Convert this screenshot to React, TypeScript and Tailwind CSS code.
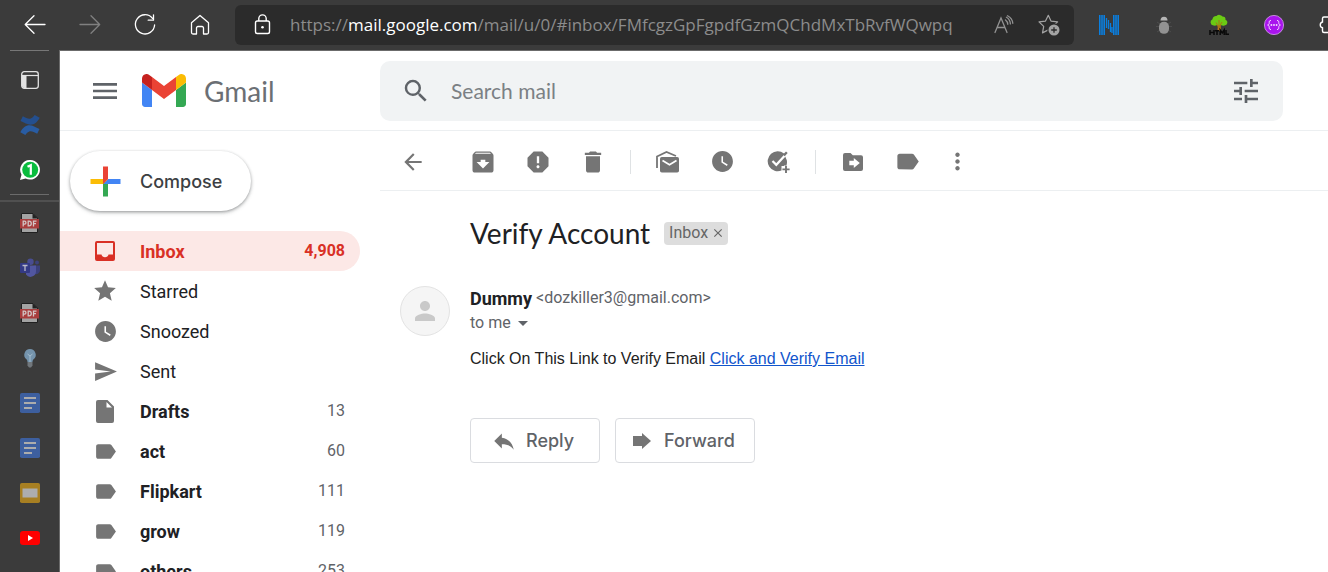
import { useState, type ReactNode } from "react";
import {
  MdArchive,
  MdArrowBack,
  MdArrowDropDown,
  MdClose,
  MdDelete,
  MdLabel,
  MdMenu,
  MdMoreVert,
  MdPerson,
  MdReply,
  MdReport,
  MdSearch,
  MdSend,
  MdStar,
  MdTune,
  MdWatchLater,
} from "react-icons/md";

const URL_HOST = "mail.google.com";
const URL_PATH = "/mail/u/0/#inbox/FMfcgzGpFgpdfGzmQChdMxTbRvfWQwpq";

function ChromeButton({ label, children }: { label: string; children: ReactNode }) {
  return (
    <button type="button" aria-label={label} className="flex h-10 w-[55px] shrink-0 items-center justify-center">
      {children}
    </button>
  );
}

function Line({ d, className }: { d: string; className: string }) {
  return (
    <svg viewBox="0 0 24 24" fill="none" stroke="currentColor" strokeWidth="1.3" strokeLinecap="round" strokeLinejoin="round" className={className}>
      <path d={d} />
    </svg>
  );
}

function AddressBar() {
  const [editing, setEditing] = useState(false);
  return (
    <div className="flex h-10 min-w-0 flex-1 items-center rounded-md bg-[#2b2b2b]">
      <button type="button" aria-label="Site information" className="flex w-[55px] shrink-0 items-center justify-center text-white">
        <svg viewBox="0 0 24 24" fill="none" stroke="currentColor" strokeWidth="1.4" className="size-6">
          <rect x="4.500" y="8" width="14" height="12.500" rx="1.8" />
          <path d="M7.800 8V5.600a3.7 3.7 0 0 1 7.4 0V8" />
          <circle cx="11.500" cy="14.300" r="1.3" fill="currentColor" stroke="none" />
        </svg>
      </button>
      {editing ? (
        <input
          aria-label="Address"
          autoFocus
          defaultValue={`https://${URL_HOST}${URL_PATH}`}
          onBlur={() => setEditing(false)}
          className="min-w-0 flex-1 bg-transparent font-['Open_Sans',sans-serif] text-[17px] text-white outline-none"
        />
      ) : (
        <button
          type="button"
          onClick={() => setEditing(true)}
          className="min-w-0 flex-1 overflow-hidden whitespace-nowrap text-left font-['Open_Sans',sans-serif] text-[17px] leading-6 text-[#8c8c8c]"
        >
          https://<span className="text-white">{URL_HOST}</span>
          {URL_PATH}
        </button>
      )}
      <button type="button" aria-label="Read aloud" className="flex w-[45px] items-center justify-center text-[#929292]">
        <svg viewBox="0 0 20 20" fill="none" stroke="currentColor" strokeWidth="1.3" strokeLinecap="round" className="size-5">
          <path d="M1 17.500 7 3l6 14.500M3 12.500h8M11.500 5c1.4 1 2.2 2.500 2.300 4.300M12.400 2.300c2.400 1.400 3.800 3.700 4 6.600M13.500.8c3.200 1.700 5 4.300 5.300 7.500" />
        </svg>
      </button>
      <button type="button" aria-label="Add to favorites" className="mr-[3px] flex w-[45px] items-center justify-center text-[#a3a3a3]">
        <svg viewBox="0 0 22 22" fill="none" className="size-[22px]">
          <path d="m10.300 1.300 2.700 5.800 6.600.8-4.800 4.500 1.100 6.500-5.600-3-5.800 3 1.200-6.500L1 7.900l6.500-.8z" stroke="currentColor" strokeWidth="1.2" strokeLinejoin="round" />
          <circle cx="16" cy="16" r="6.700" fill="#2b2b2b" />
          <circle cx="16" cy="16" r="5.500" fill="currentColor" />
          <path d="M16 13.200v5.600M13.200 16h5.600" stroke="#2b2b2b" strokeWidth="1.300" />
        </svg>
      </button>
    </div>
  );
}

function BrowserBar() {
  return (
    <header className="flex h-[50px] shrink-0 items-center bg-[#3b3b3b] pl-[7px] text-white">
      <ChromeButton label="Back">
        <Line className="size-6" d="M22 11.500H2.500M11 2.800 2.200 11.500l8.800 8.700" />
      </ChromeButton>
      <span className="flex text-[#808080]">
        <ChromeButton label="Forward">
          <Line className="size-6" d="M2 11.500h19.500M13 2.800l8.700 8.700-8.700 8.700" />
        </ChromeButton>
      </span>
      <ChromeButton label="Refresh">
        <Line className="size-6" d="M19.500 5.300A9.600 9.600 0 1 0 21.600 12M20.500 1.800v5.400h-5.300" />
      </ChromeButton>
      <ChromeButton label="Home">
        <Line className="size-6" d="M3.500 9.800 12 2.500l8.500 7.300v9.700a1.500 1.500 0 0 1-1.500 1.500h-3.500v-6a1.500 1.500 0 0 0-1.500-1.500h-4A1.500 1.500 0 0 0 8.500 15v6H5a1.500 1.500 0 0 1-1.500-1.500z" />
      </ChromeButton>
      <div className="flex min-w-0 flex-1 pl-2">
        <AddressBar />
      </div>
      <div className="flex pl-[7px]">
        <ChromeButton label="Reader extension">
          <svg viewBox="0 0 20 20" className="size-5" stroke="#0a7fe0">
            <path d="M.8 0v20M3 0v20M5.200 0v20M14.800 0v20M17 0v20M19.200 0v20" strokeWidth="1.600" />
            <path d="M7.500 3v10M9.500 5v9M11.500 8v9M13 12v6" strokeWidth="1.300" />
          </svg>
        </ChromeButton>
        <ChromeButton label="Bug extension">
          <svg viewBox="0 0 20 20" className="size-5">
            <path d="M3 7l3 2M2 11.500h4M3 17l3-2M17 7l-3 2M18 11.500h-4M17 17l-3-2" stroke="#4c4c4c" />
            <path d="M6.500 5.500a3.500 3.800 0 0 1 7 0z" fill="#b5b5b5" />
            <rect x="5" y="6.800" width="10" height="12" rx="4.800" fill="#929292" />
          </svg>
        </ChromeButton>
        <ChromeButton label="HTML tree extension">
          <svg viewBox="0 0 20 20" className="h-5 w-5 overflow-visible">
            <path d="M9 7h2.500l.5 9H8.500z" fill="#c07a16" />
            <path d="M4.500 10.500a3.300 3.300 0 0 1-1-6.300A3.500 3.500 0 0 1 7.500 1a4 4 0 0 1 6 .5 3 3 0 0 1 3 3.200 3 3 0 0 1-1 5.800c-2 .7-3.500-.5-5.500-.500s-3.500 1-5.500.500z" fill="#6bcb14" />
            <path d="m10 13-3-5.500M10 12l3-5M10 12V5" stroke="#a97912" fill="none" />
            <path d="M1 15v5M5 15v5M1 17.500h4M6 15.700h4M8 15v5M11.200 20v-5l2 3 2-3v5M17 15v4.300h3" stroke="#090909" strokeWidth="1.500" fill="none" />
          </svg>
        </ChromeButton>
        <ChromeButton label="JSON extension">
          <svg viewBox="0 0 20 20" className="size-5">
            <circle cx="10" cy="10" r="9.600" fill="#a914ed" stroke="#d6a1ed" strokeWidth=".8" />
            <path d="M7 5.500c-1.800 0-1.800.8-1.800 2.200S5 9.600 3.600 10C5 10.400 5.200 11 5.200 12.300s0 2.200 1.800 2.200M13 5.500c1.800 0 1.800.8 1.800 2.200s.2 1.900 1.600 2.300c-1.400.4-1.600 1-1.600 2.300s0 2.200-1.800 2.200" stroke="#f5ddff" fill="none" />
            <path d="M6.600 10h1.600M9.200 10h1.600M11.800 10h1.600" stroke="#fff" strokeWidth="1.500" />
          </svg>
        </ChromeButton>
      </div>
      <button type="button" aria-label="Extensions" className="flex w-[27px] shrink-0 justify-end overflow-hidden">
        <svg viewBox="0 0 9 22" fill="none" stroke="#fff" strokeWidth="1.400" className="h-[22px] w-[9px]">
          <path d="M10 3H5a1.500 1.500 0 0 0-1.500 1.500V8a3 3 0 0 0 0 5.800V17A1.500 1.500 0 0 0 5 18.500h5" />
        </svg>
      </button>
    </header>
  );
}

function RailTab({ label, children }: { label: string; children: ReactNode }) {
  return (
    <button type="button" aria-label={label} className="flex h-[45px] w-full shrink-0 items-center justify-center">
      {children}
    </button>
  );
}

function PdfIcon() {
  return (
    <svg viewBox="0 0 20 20" className="size-5">
      <path d="M1.500.5h11.500l4.500 4.500v14.500h-16z" fill="#a3a3a3" stroke="#202020" />
      <path d="M12.500 0 18 5.500h-5.500z" fill="#222" />
      <path d="M0 6h19v9.500H0z" fill="#a83e3e" />
      <path d="M3.200 13.500V8.200h1.300a1.400 1.400 0 0 1 0 2.900H3.200M8.200 8.200v4.600h.8a2.300 2.300 0 0 0 0-4.600zM13.500 13.500V8.200h3M13.500 10.700h2.500" stroke="#d3c6c6" strokeWidth="1.300" fill="none" />
    </svg>
  );
}

function DocsIcon() {
  return (
    <svg viewBox="0 0 20 20" className="size-5">
      <rect width="20" height="20" rx="1.800" fill="#3d5f9f" />
      <path d="M4 5h12M4 10h12M4 15h8" stroke="#acacac" strokeWidth="1.900" />
    </svg>
  );
}

function TabRail() {
  return (
    <aside className="flex w-[60px] shrink-0 flex-col overflow-hidden border-r border-[#6b6b6b] bg-[#3b3b3b]">
      <div className="mx-[10px] h-px shrink-0 bg-[#777]" />
      <div className="flex h-[143px] shrink-0 flex-col pt-[6px]">
        <RailTab label="Tab actions">
          <svg viewBox="0 0 18 18" className="size-[18px]">
            <rect x=".7" y=".7" width="16.600" height="16.600" rx="2.500" fill="none" stroke="#e2e2e2" strokeWidth="1.300" />
            <path d="M1 4.500h4.500V17H3a2 2 0 0 1-2-2z" fill="#e2e2e2" />
            <path d="M1 4.500h16" stroke="#e2e2e2" strokeWidth="1.200" />
          </svg>
        </RailTab>
        <RailTab label="Confluence">
          <svg viewBox="0 0 20 20" className="size-5">
            <path d="M1 5 2.800 1.200c3.500 1.800 5.700 3.200 8 2.300 2-.8 2.700-2 3.900-3.500l5 2.800C17 7.500 14.500 9.700 10.500 9.700 7.300 9.700 4.500 7.700.5 6z" fill="#244f8e" />
            <path d="M19 15 17.200 18.800c-3.500-1.800-5.700-3.200-8-2.300-2 .8-2.700 2-3.900 3.500l-5-2.800c2.700-4.700 5.200-6.900 9.200-6.900 3.200 0 6 2 10 3.700z" fill="#295ca2" />
          </svg>
        </RailTab>
        <RailTab label="WhatsApp, 1 new message">
          <svg viewBox="0 0 20 20" className="size-5">
            <path d="M10.300 0a9.800 9.800 0 1 1-4.700 18.500L0 20l1.500-5.300A9.800 9.800 0 0 1 10.300 0z" fill="#fff" />
            <circle cx="10.200" cy="9.800" r="8" fill="#0abc3e" />
            <path d="m7.500 6.800 3.300-1.600v9.600" stroke="#fff" strokeWidth="2.200" fill="none" />
          </svg>
        </RailTab>
      </div>
      <div className="mx-[10px] h-px shrink-0 bg-[#6b6b6b]" />
      <div className="mt-[5px] flex min-h-0 flex-1 flex-col shadow-[inset_0_2px_0_#505050]">
        <RailTab label="PDF document"><PdfIcon /></RailTab>
        <RailTab label="Teams">
          <svg viewBox="0 0 20 20" className="size-5">
            <circle cx="10.500" cy="3.800" r="3.200" fill="#494d91" />
            <circle cx="17" cy="4.500" r="2" fill="#3d427c" />
            <path d="M14 7.500h6V12a4 4 0 0 1-5 4z" fill="#3b407b" />
            <path d="M6 7.500h10v6a5.500 5.500 0 0 1-10 3z" fill="#5156a0" />
            <rect y="5" width="10" height="10" rx="1" fill="#343a85" />
            <path d="M2.500 7.500h5M5 7.500V13" stroke="#b9b9c9" strokeWidth="1.300" />
          </svg>
        </RailTab>
        <RailTab label="PDF document"><PdfIcon /></RailTab>
        <RailTab label="Ideas">
          <svg viewBox="0 0 20 20" className="size-5">
            <path d="M10 1a5.800 5.800 0 0 1 3.600 10.300c-.8.800-1.100 1.500-1.100 2.700h-5c0-1.200-.3-1.900-1.100-2.700A5.800 5.800 0 0 1 10 1z" fill="#7493ac" />
            <path d="M7.500 6 10 8l2.500-2M10 8v6" stroke="#a4bdce" fill="none" />
            <path d="M7.500 14h5v3.500L11 19.500H9L7.500 17.500z" fill="#71777c" />
          </svg>
        </RailTab>
        <RailTab label="Document"><DocsIcon /></RailTab>
        <RailTab label="Document"><DocsIcon /></RailTab>
        <RailTab label="Presentation">
          <svg viewBox="0 0 20 20" className="size-5">
            <rect width="20" height="20" rx="1.800" fill="#a77f22" />
            <rect x="2.500" y="5.500" width="15" height="9" fill="#adadad" />
          </svg>
        </RailTab>
        <RailTab label="YouTube">
          <svg viewBox="0 0 20 14" className="h-[14px] w-5">
            <rect width="20" height="14" rx="3.200" fill="#f00" />
            <path d="m8 4 5 3-5 3z" fill="#fff" />
          </svg>
        </RailTab>
      </div>
    </aside>
  );
}

function GmailHeader() {
  return (
    <header className="flex h-20 shrink-0 items-center border-b border-[#eceff1] pr-[45px]">
      <div className="flex w-80 shrink-0 items-center">
        <button type="button" aria-label="Main menu" className="ml-[29px] text-[#5f6368]">
          <MdMenu className="size-8" />
        </button>
        <a href="#inbox" className="ml-[21px] flex items-center gap-[18px]">
          <svg viewBox="52 42 88 66" className="h-[33px] w-11">
            <path fill="#4285f4" d="M58 108h14V74L52 59v43c0 3.320 2.690 6 6 6" />
            <path fill="#34a853" d="M120 108h14c3.320 0 6-2.690 6-6V59l-20 15" />
            <path fill="#fbbc04" d="M120 48v26l20-15v-8c0-7.420-8.470-11.650-14.400-7.200" />
            <path fill="#ea4335" d="M72 74V48l24 18 24-18v26L96 92" />
            <path fill="#c5221f" d="M52 51v8l20 15V48l-5.600-4.200c-5.940-4.450-14.400-.220-14.400 7.200" />
          </svg>
          <span className="font-['Lato',sans-serif] text-[28px] leading-8 text-[#6b6f74]">Gmail</span>
        </a>
      </div>
      <form role="search" className="flex h-[60px] min-w-0 flex-1 items-center rounded-[10px] bg-[#f1f3f4] px-[21px] text-[#5f6368]">
        <button type="button" aria-label="Search"><MdSearch className="size-[30px]" /></button>
        <input
          type="text"
          aria-label="Search mail"
          placeholder="Search mail"
          className="ml-5 min-w-0 flex-1 bg-transparent font-['Lato',sans-serif] text-[21px] outline-none placeholder:text-[#7b8084]"
        />
        <button type="button" aria-label="Search options"><MdTune className="size-8" /></button>
      </form>
    </header>
  );
}

const folders = [
  { name: "Inbox", count: "4,908", kind: "inbox", bold: true },
  { name: "Starred", count: "", kind: "star", bold: false },
  { name: "Snoozed", count: "", kind: "clock", bold: false },
  { name: "Sent", count: "", kind: "send", bold: false },
  { name: "Drafts", count: "13", kind: "file", bold: true },
  { name: "act", count: "60", kind: "label", bold: true },
  { name: "Flipkart", count: "111", kind: "label", bold: true },
  { name: "grow", count: "119", kind: "label", bold: true },
  { name: "others", count: "253", kind: "label", bold: true },
];

function FolderIcon({ kind }: { kind: string }) {
  switch (kind) {
    case "inbox":
      return (
        <svg viewBox="0 0 20 20" className="size-5" fill="currentColor">
          <path fillRule="evenodd" d="M2 0h16a2 2 0 0 1 2 2v16a2 2 0 0 1-2 2H2a2 2 0 0 1-2-2V2a2 2 0 0 1 2-2zm0 2v11.500h4.500a3.600 3.600 0 0 0 7 0H18V2z" />
        </svg>
      );
    case "star":
      return <MdStar className="size-[26px]" />;
    case "clock":
      return <MdWatchLater className="size-[25px]" />;
    case "send":
      return <MdSend className="size-[25px]" />;
    case "file":
      return (
        <svg viewBox="0 0 18 23" className="h-[23px] w-[18px]" fill="currentColor">
          <path fillRule="evenodd" d="M2 0h9.500L18 6.500V21a2 2 0 0 1-2 2H2a2 2 0 0 1-2-2V2a2 2 0 0 1 2-2zm8.500 2v5.500H16z" />
        </svg>
      );
    default:
      return <MdLabel className="size-[25px]" />;
  }
}

function Sidebar() {
  return (
    <div className="flex w-80 shrink-0 flex-col pt-5">
      <button
        type="button"
        className="ml-[10px] flex h-[60px] w-[181px] shrink-0 items-center rounded-full bg-white pl-[13px] font-['Inter',sans-serif] text-[18px] font-medium text-[#3c4043] shadow-[0_1px_3px_rgba(60,64,67,0.4),0_2px_4px_rgba(60,64,67,0.2)]"
      >
        <svg viewBox="0 0 36 36" className="mr-[12px] size-[45px] shrink-0">
          <path fill="#34a853" d="M16 16v14h4V20z" />
          <path fill="#4285f4" d="M30 16H20l-4 4h14z" />
          <path fill="#fbbc05" d="M6 16v4h10l4-4z" />
          <path fill="#ea4335" d="M20 16V6h-4v14z" />
        </svg>
        Compose
      </button>
      <nav aria-label="Mailboxes" className="mt-5 mr-5">
        {folders.map((f) => (
          <a
            key={f.name}
            href={"#" + f.name.toLowerCase()}
            className={
              "flex h-10 items-center rounded-r-full pr-[15px] pl-[25px] font-['Roboto',sans-serif] " +
              (f.kind === "inbox" ? "bg-[#fce8e6] text-[#d93025]" : "text-[#202124]")
            }
          >
            <span className={"flex w-10 shrink-0 justify-center " + (f.kind === "inbox" ? "text-[#d93025]" : "text-[#757575]")}>
              <FolderIcon kind={f.kind} />
            </span>
            <span className={"ml-[15px] flex-1 text-[18px] " + (f.bold ? "font-bold" : "")}>{f.name}</span>
            <span className={f.kind === "inbox" ? "text-base font-bold" : "text-base text-[#5f6368]"}>{f.count}</span>
          </a>
        ))}
      </nav>
    </div>
  );
}

function Tool({ label, children }: { label: string; children: ReactNode }) {
  return (
    <button type="button" aria-label={label} className="flex h-10 w-[55px] shrink-0 items-center justify-center">
      {children}
    </button>
  );
}

function ToolDivider() {
  return (
    <div className="flex w-5 shrink-0 justify-center">
      <span className="h-6 w-px bg-[#dfe2e4]" />
    </div>
  );
}

function Toolbar() {
  return (
    <div className="flex h-[60px] shrink-0 items-center border-b border-[#eceff1] pt-[2px] pl-[5px] text-[#757575]">
      <Tool label="Back to Inbox"><MdArrowBack className="size-[26px]" /></Tool>
      <div className="w-[15px] shrink-0" />
      <Tool label="Archive"><MdArchive className="size-7" /></Tool>
      <Tool label="Report spam"><MdReport className="size-7" /></Tool>
      <Tool label="Delete"><MdDelete className="size-7" /></Tool>
      <ToolDivider />
      <Tool label="Mark as unread">
        <svg viewBox="0 0 23 22" className="h-[22px] w-[23px]">
          <path d="M1 17V5.500L10.500 1l9.500 4" fill="none" stroke="currentColor" strokeWidth="1.800" />
          <rect x="4" y="6" width="19" height="15.500" rx="1.800" fill="currentColor" />
          <path d="m6.500 9.500 7 4.300 7-4.300" fill="none" stroke="#fff" strokeWidth="1.700" />
        </svg>
      </Tool>
      <Tool label="Snooze"><MdWatchLater className="size-[25px]" /></Tool>
      <Tool label="Add to Tasks">
        <svg viewBox="0 0 24 24" className="size-6">
          <path d="M18 3.500A10 10 0 1 0 15.500 20.500V16h4.800a10 10 0 0 0 .5-5.800" fill="currentColor" />
          <path d="m6.500 11 3.800 3.800L20.500 3.800" fill="none" stroke="#fff" strokeWidth="2.200" />
          <path d="m17 4.600 3-3.100 1.700 1.600-3 3.200z" fill="currentColor" />
          <path d="M20 15.500v8M16 19.500h8" stroke="#fff" strokeWidth="4" />
          <path d="M20 15.800V23M16.400 19.400h7.200" stroke="currentColor" strokeWidth="1.900" />
        </svg>
      </Tool>
      <ToolDivider />
      <Tool label="Move to">
        <svg viewBox="0 0 20 18" className="h-[18px] w-5">
          <path d="M2 0h5.500l2.300 2.200H18a2 2 0 0 1 2 2V16a2 2 0 0 1-2 2H2a2 2 0 0 1-2-2V2a2 2 0 0 1 2-2z" fill="currentColor" />
          <path d="M6.300 7.700h4.500V4.900l6 5.100-6 5.100v-2.800H6.300z" fill="#fff" />
        </svg>
      </Tool>
      <Tool label="Labels"><MdLabel className="size-[27px]" /></Tool>
      <button type="button" aria-label="More" className="flex w-[45px] justify-center"><MdMoreVert className="size-[27px]" /></button>
    </div>
  );
}

const actionClass =
  "flex h-[45px] items-center rounded-[4px] border border-[#dadce0] font-['Inter',sans-serif] text-[18px] font-medium text-[#5f6368]";

function Message() {
  return (
    <article className="pt-[22px] pl-5 font-['Roboto',sans-serif]">
      <div className="flex h-10 items-center pl-[70px]">
        <h1 className="font-['Lato',sans-serif] text-[28px] leading-10 text-[#202124]">Verify Account</h1>
        <span className="ml-[14px] flex h-[23px] items-center rounded-[4px] bg-[#ddd] pr-[3px] pl-[5px] text-base leading-5 text-[#666]">
          Inbox
          <button type="button" aria-label="Remove label Inbox" className="ml-[3px]">
            <MdClose className="size-[14px]" />
          </button>
        </span>
      </div>
      <div className="mt-[33px] flex">
        <div className="flex size-[50px] shrink-0 items-center justify-center rounded-full border border-[#e3e3e3] bg-[#f5f5f5] text-[#c9c9c9]">
          <MdPerson className="size-[30px]" />
        </div>
        <div className="min-w-0 flex-1 pl-5">
          <div className="flex h-6 items-center gap-1">
            <span className="text-[18px] font-bold text-[#202124]">Dummy</span>
            <span className="text-base leading-5 text-[#5f6368]">&lt;dozkiller3@gmail.com&gt;</span>
          </div>
          <button type="button" aria-label="Show details" className="flex h-[25px] items-center text-base leading-5 text-[#5f6368]">
            to me
            <MdArrowDropDown className="size-6" />
          </button>
          <p className="mt-3 font-['Liberation_Sans',sans-serif] text-base leading-6 text-[#222]">
            Click On This Link to Verify Email{" "}
            <a href="#verify" className="text-[#1155cc] underline">Click and Verify Email</a>
          </p>
          <div className="mt-[47px] flex gap-[15px]">
            <button type="button" className={actionClass + " w-[130px] gap-[9px] pl-5"}>
              <MdReply className="size-[26px] text-[#757575]" />
              Reply
            </button>
            <button type="button" className={actionClass + " w-[140px] gap-[13px] pl-[17px]"}>
              <svg viewBox="0 0 18 16" className="h-4 w-[18px] text-[#757575]" fill="currentColor">
                <path d="M0 3h9V0l9 8-9 8v-3H0z" />
              </svg>
              Forward
            </button>
          </div>
        </div>
      </div>
    </article>
  );
}

export default function App() {
  return (
    <div className="flex h-screen flex-col overflow-hidden bg-white">
      <BrowserBar />
      <div className="flex min-h-0 flex-1">
        <TabRail />
        <main className="flex min-w-0 flex-1 flex-col overflow-hidden border-t border-[#6b6b6b] bg-white">
          <GmailHeader />
          <div className="flex min-h-0 flex-1">
            <Sidebar />
            <section className="min-w-0 flex-1">
              <Toolbar />
              <Message />
            </section>
          </div>
        </main>
      </div>
    </div>
  );
}
